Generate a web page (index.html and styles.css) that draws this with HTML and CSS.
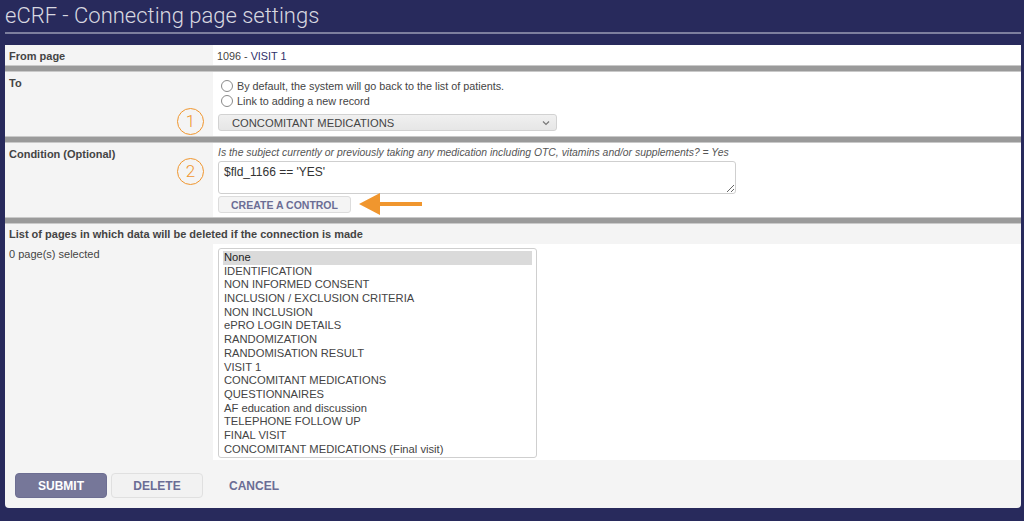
FILE: index.html
```html
<!DOCTYPE html>
<html lang="en">
<head>
<meta charset="utf-8">
<title>eCRF - Connecting page settings</title>
<link rel="stylesheet" href="styles.css">
</head>
<body>
<div class="page">
  <h1 class="title">eCRF - Connecting page settings</h1>

  <div class="panel">
    <div class="row row-from">
      <div class="label">From page</div>
      <div class="value">1096 - <span class="link">VISIT 1</span></div>
    </div>
    <div class="sep"></div>

    <div class="row row-to">
      <div class="label">To</div>
      <div class="value">
        <label class="radio"><span class="dot"></span>By default, the system will go back to the list of patients.</label>
        <label class="radio"><span class="dot"></span>Link to adding a new record</label>
        <div class="select">
          <span>CONCOMITANT MEDICATIONS</span>
          <svg class="chev" width="8" height="6" viewBox="0 0 8 6"><path d="M1 1.5 L4 4.5 L7 1.5" fill="none" stroke="#777" stroke-width="1.2"/></svg>
        </div>
        <span class="step step-1">1</span>
      </div>
    </div>
    <div class="sep"></div>

    <div class="row row-cond">
      <div class="label">Condition (Optional)</div>
      <div class="value">
        <div class="hint">Is the subject currently or previously taking any medication including OTC, vitamins and/or supplements? = Yes</div>
        <textarea class="expr">$fld_1166 == 'YES'</textarea>
        <button class="btn-small" type="button">CREATE A CONTROL</button>
        <span class="step step-2">2</span>
        <svg class="arrow" width="64" height="22" viewBox="0 0 64 22"><path d="M0 11 L21 0 L21 9 L63 9 L63 13 L21 13 L21 22 Z" fill="#f0962e"/></svg>
      </div>
    </div>
    <div class="sep"></div>

    <div class="row-head">List of pages in which data will be deleted if the connection is made</div>
    <div class="row row-list">
      <div class="label plain">0 page(s) selected</div>
      <div class="value">
        <div class="listbox">
          <div class="opt selected">None</div>
          <div class="opt">IDENTIFICATION</div>
          <div class="opt">NON INFORMED CONSENT</div>
          <div class="opt">INCLUSION / EXCLUSION CRITERIA</div>
          <div class="opt">NON INCLUSION</div>
          <div class="opt">ePRO LOGIN DETAILS</div>
          <div class="opt">RANDOMIZATION</div>
          <div class="opt">RANDOMISATION RESULT</div>
          <div class="opt">VISIT 1</div>
          <div class="opt">CONCOMITANT MEDICATIONS</div>
          <div class="opt">QUESTIONNAIRES</div>
          <div class="opt">AF education and discussion</div>
          <div class="opt">TELEPHONE FOLLOW UP</div>
          <div class="opt">FINAL VISIT</div>
          <div class="opt">CONCOMITANT MEDICATIONS (Final visit)</div>
        </div>
      </div>
    </div>

    <div class="footer">
      <button class="btn btn-primary" type="button">SUBMIT</button>
      <button class="btn btn-light" type="button">DELETE</button>
      <button class="btn btn-text" type="button">CANCEL</button>
    </div>
  </div>
</div>
</body>
</html>
```

FILE: styles.css
```css
html, body {
  margin: 0;
  padding: 0;
  background: #282a5c;
}

body {
  font-family: "Liberation Sans", Arial, sans-serif;
  font-size: 10.8px;
  color: #444;
}

.page {
  padding: 0 3px 0 5px;
}

.title {
  margin: 0;
  padding: 4px 0 5px 0;
  font-family: Roboto, "Liberation Sans", sans-serif;
  font-weight: 300;
  font-size: 22px;
  line-height: 23px;
  color: #d8d8e0;
  border-bottom: 2px solid #7d7f9e;
}

.panel {
  margin-top: 11px;
  background: #f4f4f4;
  border-radius: 0 0 4px 4px;
  overflow: hidden;
}

.row {
  display: grid;
  grid-template-columns: 208px 1fr;
}

.label {
  background: #f4f4f4;
  font-weight: bold;
  font-size: 11px;
  padding: 5px 4px;
  color: #444;
}

.label.plain {
  font-weight: normal;
}

.value {
  background: #fff;
  padding: 5px 4px;
  position: relative;
}

.row-from .label,
.row-from .value {
  height: 20px;
  box-sizing: border-box;
}

.link {
  color: #2e306a;
}

.sep {
  height: 5px;
  background: #9a9a9a;
  border-top: 1px solid #c9c9c9;
  border-bottom: 1px solid #c9c9c9;
}

/* "To" row */
.row-to .value {
  height: 64px;
  box-sizing: border-box;
  padding: 6px 4px 0 8px;
  display: flex;
  flex-direction: column;
  align-items: flex-start;
}

.radio {
  display: flex;
  align-items: center;
  height: 15px;
  color: #444;
}

.dot {
  width: 10px;
  height: 10px;
  border: 1px solid #8a8a8a;
  border-radius: 50%;
  margin-right: 4px;
  background: #fff;
}

.select {
  margin-top: 6px;
  margin-left: -3px;
  width: 339px;
  height: 17px;
  box-sizing: border-box;
  border: 1px solid #d2d2d2;
  border-radius: 3px;
  background: linear-gradient(#f0f0f0, #e6e6e6);
  display: flex;
  align-items: center;
  justify-content: space-between;
  padding: 0 6px 0 13px;
  font-size: 11.2px;
  color: #444;
}

.chev {
  display: block;
}

.step {
  position: absolute;
  left: -36px;
  width: 25px;
  height: 25px;
  border: 1.5px solid #f0962e;
  border-radius: 50%;
  color: #f0962e;
  font-family: Roboto, "Liberation Sans", sans-serif;
  font-weight: 300;
  font-size: 17px;
  line-height: 25px;
  text-align: center;
}

.step-1 {
  top: 36px;
}

.step-2 {
  top: 15px;
}

/* Condition row */
.row-cond .value {
  height: 74px;
  box-sizing: border-box;
  padding: 3px 4px 0 5px;
  display: flex;
  flex-direction: column;
  align-items: flex-start;
}

.hint {
  font-style: italic;
  font-size: 10.4px;
  color: #555;
  height: 14px;
  line-height: 14px;
}

.expr {
  width: 518px;
  height: 33px;
  box-sizing: border-box;
  margin: 1px 0 0 0;
  padding: 3px 5px;
  border: 1px solid #cfcfcf;
  border-radius: 3px;
  font-family: "Liberation Sans", Arial, sans-serif;
  font-size: 12px;
  color: #333;
  resize: both;
}

.btn-small {
  margin-top: 2px;
  width: 133px;
  height: 17px;
  border: 1px solid #dcdcdc;
  border-radius: 3px;
  background: #f4f4f4;
  color: #6b6d95;
  font-family: "Liberation Sans", Arial, sans-serif;
  font-weight: bold;
  font-size: 10.5px;
  padding: 0;
}

.arrow {
  position: absolute;
  left: 146px;
  top: 50px;
}

/* Pages list */
.row-head {
  background: #f4f4f4;
  font-weight: bold;
  font-size: 11px;
  padding: 0 4px;
  height: 20px;
  line-height: 20px;
}

.row-list .label {
  padding-top: 4px;
}

.row-list .value {
  padding: 4px 4px 2px 5px;
}

.listbox {
  width: 319px;
  height: 210px;
  box-sizing: border-box;
  border: 1px solid #cfcfcf;
  border-radius: 3px;
  padding: 2px 4px 0 4px;
  font-size: 11.2px;
  color: #444;
}

.opt {
  height: 13.7px;
  line-height: 13.7px;
  padding-left: 1px;
}

.opt.selected {
  background: #dadada;
  color: #222;
}

/* Footer buttons */
.footer {
  display: flex;
  align-items: center;
  gap: 4px;
  padding: 13px 10px 10px 10px;
  height: 48px;
  box-sizing: border-box;
}

.btn {
  height: 25px;
  width: 92px;
  border-radius: 4px;
  font-family: "Liberation Sans", Arial, sans-serif;
  font-weight: bold;
  font-size: 12px;
  padding: 0;
}

.btn-primary {
  background: #767799;
  border: 1px solid #6d6e92;
  color: #fff;
}

.btn-light {
  background: #f2f2f2;
  border: 1px solid #e0e0e0;
  color: #6b6d95;
}

.btn-text {
  background: transparent;
  border: none;
  color: #6b6d95;
  width: auto;
  margin-left: 22px;
}
```
